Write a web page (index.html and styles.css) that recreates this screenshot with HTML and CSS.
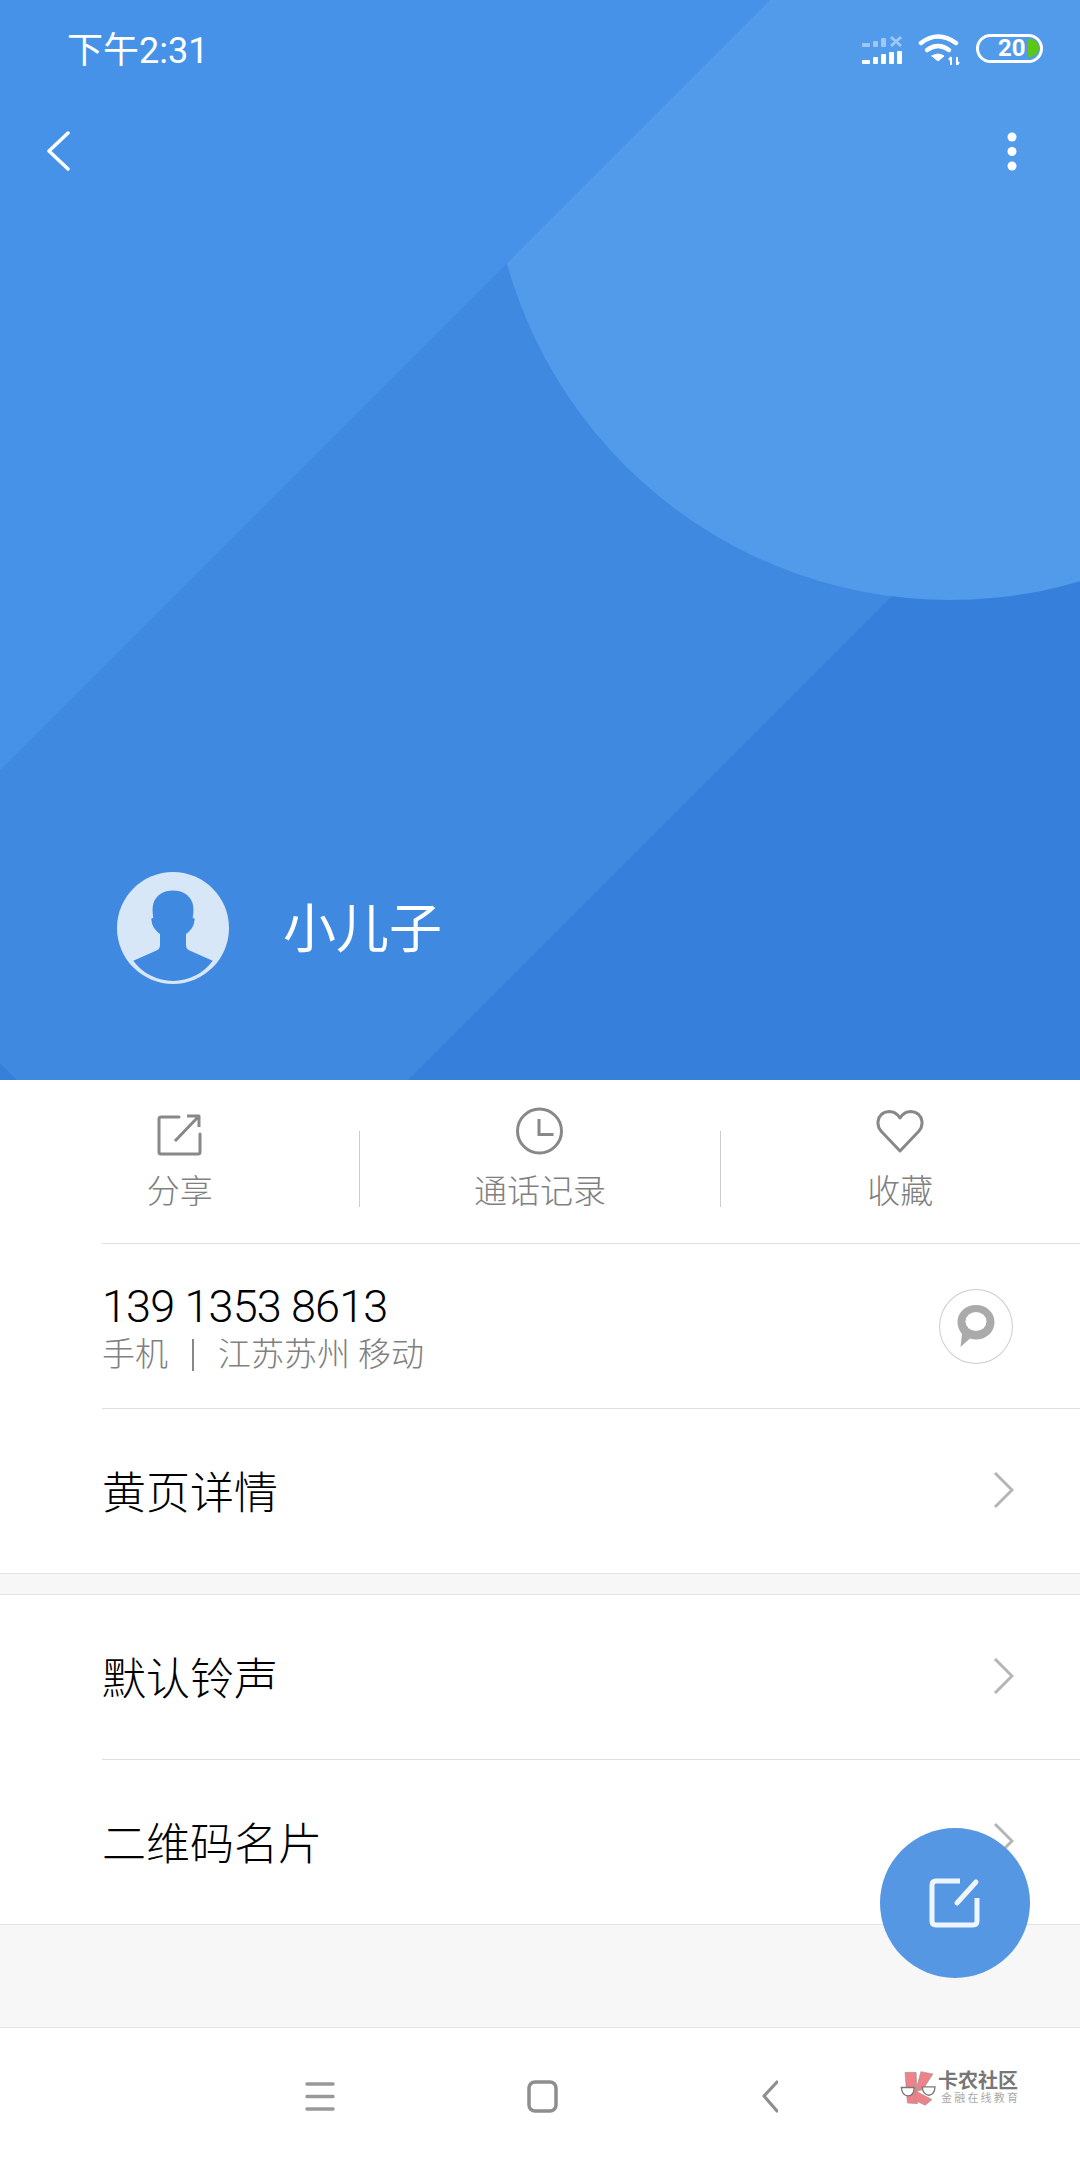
FILE: index.html
```html
<!DOCTYPE html>
<html lang="zh-CN">
<head>
    <meta charset="UTF-8">
    <meta name="viewport" content="width=device-width, initial-scale=1.0">
    <title>小儿子</title>
    <link rel="stylesheet" href="styles.css">
</head>
<body>
    <div class="page">
        <header class="hero">
            <svg class="hero-bg" viewBox="0 0 1080 1080" width="1080" height="1080">
                <defs>
                    <clipPath id="circleClip"><polygon points="770,0 1080,0 1080,1080 0,1080 0,770"/></clipPath>
                </defs>
                <rect class="bg-mid" width="1080" height="1080"/>
                <polygon class="bg-top" points="0,0 770,0 0,770"/>
                <polygon class="bg-dark" points="1080,408 1080,1080 408,1080"/>
                <polygon class="bg-dark" points="0,1063 17,1080 0,1080"/>
                <circle class="bg-circle" cx="950" cy="140" r="460" clip-path="url(#circleClip)"/>
            </svg>

            <div class="status-bar">
                <span class="clock">下午2:31</span>
                <div class="status-icons">
                    <svg class="signal" width="40" height="30" viewBox="862 35 40 30" fill="#fff">
                        <g opacity="0.45">
                            <rect x="862" y="43" width="8" height="4" rx="1"/>
                            <rect x="873" y="41" width="5" height="6" rx="1"/>
                            <rect x="881" y="38" width="5" height="9" rx="1"/>
                            <path d="M891 37l10 9M901 37l-10 9" stroke="#fff" stroke-width="3" fill="none"/>
                        </g>
                        <rect x="862" y="60" width="8" height="4" rx="1"/>
                        <rect x="873" y="57" width="5" height="7" rx="1"/>
                        <rect x="881" y="54" width="5" height="10" rx="1"/>
                        <rect x="889" y="52" width="5" height="12" rx="1"/>
                        <rect x="897" y="51" width="5" height="13" rx="1"/>
                    </svg>
                    <svg class="wifi" width="42" height="32" viewBox="918 33 42 32" fill="none" stroke="#fff" stroke-width="4.500" stroke-linecap="round">
                        <path d="M921 43q17-13 35 0"/>
                        <path d="M927 50q11-8 22 0"/>
                        <path d="M932 56l6 5 6-5q-6-4-12 0z" fill="#fff" stroke-width="1"/>
                        <path d="M951 57v8M949 60l2-3M957 65v-8M959 62l-2 3" stroke-width="2" stroke-linecap="butt"/>
                    </svg>
                    <div class="battery">
                        <span class="battery-num">20</span>
                        <span class="battery-level"></span>
                    </div>
                </div>
            </div>

            <div class="toolbar">
                <svg width="24" height="40" viewBox="0 0 24 40" fill="none" stroke="#fff" stroke-width="3.5" stroke-linecap="round" stroke-linejoin="round">
                    <path d="M22 2L3 20l19 18"/>
                </svg>
                <svg width="10" height="40" viewBox="0 0 10 40" fill="#fff">
                    <circle cx="5" cy="6" r="4.5"/>
                    <circle cx="5" cy="20.500" r="4.5"/>
                    <circle cx="5" cy="35" r="4.5"/>
                </svg>
            </div>

            <div class="profile">
                <svg class="avatar" width="112" height="112" viewBox="0 0 112 112">
                    <circle cx="56" cy="56" r="56" fill="#d8e7f8"/>
                    <path class="bg-mid" d="M16.300 88.700L39.500 78.500Q43 77 43 73V62Q40 60 37 56Q34.500 52 34.300 47Q34.300 46 36.300 46C35.500 41 35 36 36.500 31C39 23 47 18.500 56 18.500C65 18.500 73 23 75.500 31C77 36 76.500 41 75.700 46Q77.700 46 77.700 47Q77.500 52 75 56Q72 60 69 62V73Q69 77 72.500 78.500L95.700 88.700A49 49 0 0 1 16.300 88.700Z"/>
                </svg>
                <span class="name">小儿子</span>
            </div>
        </header>

        <section class="actions">
            <div class="action">
                <svg class="action-icon" width="48" height="50" viewBox="0 0 48 50" fill="none" stroke="#888" stroke-width="3" stroke-linecap="round" stroke-linejoin="round">
                    <path d="M23 11H5q-2 0-2 2v33q0 2 2 2h37q2 0 2-2V28"/>
                    <path d="M19 35L43 10M31 10h12v11" stroke-linecap="butt"/>
                </svg>
                <span class="action-label">分享</span>
            </div>
            <div class="divider"></div>
            <div class="action">
                <svg class="action-icon" width="48" height="50" viewBox="0 0 48 50" fill="none" stroke="#888" stroke-width="3">
                    <circle cx="23.500" cy="25" r="22"/>
                    <path d="M23 13v15.500H37.500"/>
                </svg>
                <span class="action-label">通话记录</span>
            </div>
            <div class="divider"></div>
            <div class="action">
                <svg class="action-icon" width="48" height="50" viewBox="0 0 48 50" fill="none" stroke="#888" stroke-width="3" stroke-linejoin="round">
                    <path d="M24 45L5 25Q1.500 21 2 15.500Q3.500 6 13 5.500Q20 5.500 24 12Q28 5.500 35 5.500Q44.500 6 46 15.500Q46.500 21 43 25Z"/>
                </svg>
                <span class="action-label">收藏</span>
            </div>
        </section>

        <div class="row row-phone">
            <div class="phone-info">
                <div class="phone-number">139 1353 8613</div>
                <div class="phone-meta">
                    <span>手机</span>
                    <span class="meta-sep"></span>
                    <span>江苏苏州 移动</span>
                </div>
            </div>
            <div class="msg-button">
                <svg class="msg-glyph" width="38" height="42" viewBox="0 0 38 42">
                    <path fill="#aaa" d="M19 0C8.500 0 .5 7.500 .5 17C.5 22 2.500 26 5 29L3.500 42L13 33.500C15 34 17 34.500 19 34.500C29.500 34.500 37.500 27 37.500 17C37.500 7.500 29.500 0 19 0Z"/>
                    <ellipse fill="#fff" cx="19" cy="16.500" rx="10.500" ry="9.500"/>
                </svg>
            </div>
        </div>

        <div class="row row-link">
            <span>黄页详情</span>
            <svg class="chevron" width="21" height="38" viewBox="0 0 21 38"><path d="M2 2l17 17L2 36"/></svg>
        </div>

        <div class="gap"></div>

        <div class="row row-link row-first">
            <span>默认铃声</span>
            <svg class="chevron" width="21" height="38" viewBox="0 0 21 38"><path d="M2 2l17 17L2 36"/></svg>
        </div>
        <div class="row row-link">
            <span>二维码名片</span>
            <svg class="chevron" width="21" height="38" viewBox="0 0 21 38"><path d="M2 2l17 17L2 36"/></svg>
        </div>

        <div class="filler"></div>

        <nav class="nav">
            <svg class="nav-menu" width="30" height="30" viewBox="0 0 30 30" stroke="#999" stroke-width="3.500" stroke-linecap="round">
                <path d="M2 3h26M2 15.500h26M2 28h26"/>
            </svg>
            <svg class="nav-home" width="31" height="33" viewBox="0 0 31 33" fill="none" stroke="#8e8e8e" stroke-width="3.500">
                <rect x="2" y="2" width="27" height="29" rx="6"/>
            </svg>
            <svg class="nav-back" width="16" height="33" viewBox="0 0 16 33" fill="none" stroke="#8e8e8e" stroke-width="3.200" stroke-linecap="round" stroke-linejoin="round">
                <path d="M15 2L2 16l13 15"/>
            </svg>
            <div class="logo">
                <svg width="37" height="37" viewBox="60 60 110 110">
                    <polygon fill="#f0818a" stroke="#999" stroke-width="2" points="75,67 108,67 112,160 82,158"/>
                    <polygon fill="#f0818a" stroke="#999" stroke-width="2" points="122,65 158,72 128,118 106,125"/>
                    <polygon fill="#f0818a" stroke="#999" stroke-width="2" points="106,122 155,148 135,165 104,150"/>
                    <path fill="#fff" stroke="#777" stroke-width="4" d="M64 112H102Q102 136 84 137Q66 136 64 112Z"/>
                    <path fill="#fff" stroke="#777" stroke-width="4" d="M126 110H164Q163 134 146 135Q128 134 126 110Z"/>
                </svg>
                <div class="logo-text">
                    <div class="logo-title">卡农社区</div>
                    <div class="logo-sub">金融在线教育</div>
                </div>
            </div>
        </nav>

        <button class="fab">
            <svg width="52" height="50" viewBox="0 0 52 50" fill="none" stroke="#eef5fc" stroke-width="5" stroke-linecap="round">
                <path d="M31 3H7Q3 3 3 7V43Q3 47 7 47H44Q48 47 48 43V20" stroke-linecap="butt"/>
                <path d="M28 25L47 4"/>
            </svg>
        </button>
    </div>
</body>
</html>
```

FILE: styles.css
```css
* {
    box-sizing: border-box;
}

body {
    margin: 0;
    font-family: Roboto, "Noto Sans CJK SC", sans-serif;
    background-color: #fff;
}

.page {
    position: relative;
    width: 1080px;
    height: 2158px;
    overflow: hidden;
    display: flex;
    flex-direction: column;
}

/* header */
.hero {
    position: relative;
    height: 1080px;
    display: flex;
    flex-direction: column;
    color: #fff;
}

.hero-bg {
    position: absolute;
    top: 0;
    left: 0;
}

.bg-top { fill: #4792e9; }
.bg-mid { fill: #3f89e0; }
.bg-dark { fill: #3680db; }
.bg-circle { fill: #529aea; }

.status-bar,
.toolbar,
.profile {
    position: relative;
}

.status-bar {
    height: 96px;
    display: flex;
    align-items: center;
    justify-content: space-between;
    padding: 0 37px 0 67px;
}

.clock {
    font-size: 36px;
    font-weight: 400;
    padding-bottom: 2px;
}

.status-icons {
    display: flex;
    align-items: center;
}

.signal {
    margin-top: 4px;
}

.wifi {
    margin: 2px 0 0 16px;
}

.battery {
    display: flex;
    align-items: center;
    width: 67px;
    height: 29px;
    margin-left: 16px;
    padding-left: 19px;
    border: 3px solid #fff;
    border-radius: 15px;
}

.battery-num {
    font-size: 24px;
    font-weight: 700;
    line-height: 23px;
}

.battery-level {
    width: 11px;
    height: 18px;
    margin-left: 2px;
    background-color: #5ac814;
    border-radius: 0 9px 9px 0;
}

.toolbar {
    height: 110px;
    display: flex;
    align-items: center;
    justify-content: space-between;
    padding: 0 63px 0 46px;
}

.profile {
    margin-top: auto;
    padding: 0 0 96px 117px;
    display: flex;
    align-items: center;
    gap: 54px;
}

.name {
    font-size: 53px;
    font-weight: 400;
    line-height: 60px;
    padding-top: 4px;
}

/* action buttons */
.actions {
    height: 163px;
    display: flex;
}

.action {
    flex: 1;
    display: flex;
    flex-direction: column;
    align-items: center;
    padding-top: 26px;
}

.action-icon {
    display: block;
    height: 50px;
}

.action-label {
    margin-top: 16px;
    font-size: 33px;
    font-weight: 300;
    line-height: 40px;
    color: #808080;
}

.divider {
    width: 1px;
    height: 76px;
    margin-top: 51px;
    background-color: #ccc;
}

/* list rows */
.row {
    height: 165px;
    margin-left: 102px;
    padding: 0 66px 3px 0;
    display: flex;
    align-items: center;
    justify-content: space-between;
    border-top: 1px solid #e0e0e0;
}

.row-link {
    font-size: 44px;
    font-weight: 300;
    color: #000;
}

.row-first {
    height: 164px;
    border-top: none;
}

.chevron {
    fill: none;
    stroke: #b5b5b5;
    stroke-width: 3;
}

.row-phone {
    padding-bottom: 0;
}

.phone-info {
    padding-top: 6px;
}

.phone-number {
    font-size: 45px;
    font-weight: 300;
    line-height: 52px;
    color: #000;
    letter-spacing: -0.85px;
}

.phone-meta {
    display: flex;
    align-items: center;
    font-size: 33px;
    font-weight: 300;
    line-height: 44px;
    color: #808080;
}

.meta-sep {
    width: 2px;
    height: 32px;
    margin: 0 24px 0 24px;
    background-color: #888;
}

.msg-button {
    width: 74px;
    height: 75px;
    margin: 0 1px 0 0;
    border: 1px solid #ccc;
    border-radius: 50%;
    display: flex;
    align-items: center;
    justify-content: center;
}

.msg-glyph {
    display: block;
    margin-top: -1px;
}

.gap {
    height: 22px;
    background-color: #f7f7f7;
    border-top: 1px solid #e5e5e5;
    border-bottom: 1px solid #e5e5e5;
}

.filler {
    flex: 1;
    background-color: #f7f7f7;
    border-top: 1px solid #e5e5e5;
}

/* bottom bar */
.nav {
    height: 131px;
    display: flex;
    align-items: center;
    padding: 6px 0 0 305px;
    border-top: 1px solid #e5e5e5;
    background-color: #fff;
}

.nav svg {
    display: block;
    flex-shrink: 0;
}

.nav-home {
    margin-left: 192px;
}

.nav-back {
    margin-left: 204px;
}

.logo {
    display: flex;
    align-items: center;
    margin: 0 0 15px 122px;
}

.logo-text {
    margin-left: 1px;
}

.logo-title {
    font-size: 20px;
    font-weight: 700;
    line-height: 20px;
    color: #777;
}

.logo-sub {
    margin: 1px 0 0 3px;
    font-size: 11px;
    line-height: 14px;
    letter-spacing: 2.2px;
    color: #aaa;
    white-space: nowrap;
}

/* floating edit button */
.fab {
    position: absolute;
    left: 880px;
    top: 1828px;
    width: 150px;
    height: 150px;
    padding: 0;
    border: none;
    border-radius: 50%;
    background-color: #5597e2;
    display: flex;
    align-items: center;
    justify-content: center;
}
```
